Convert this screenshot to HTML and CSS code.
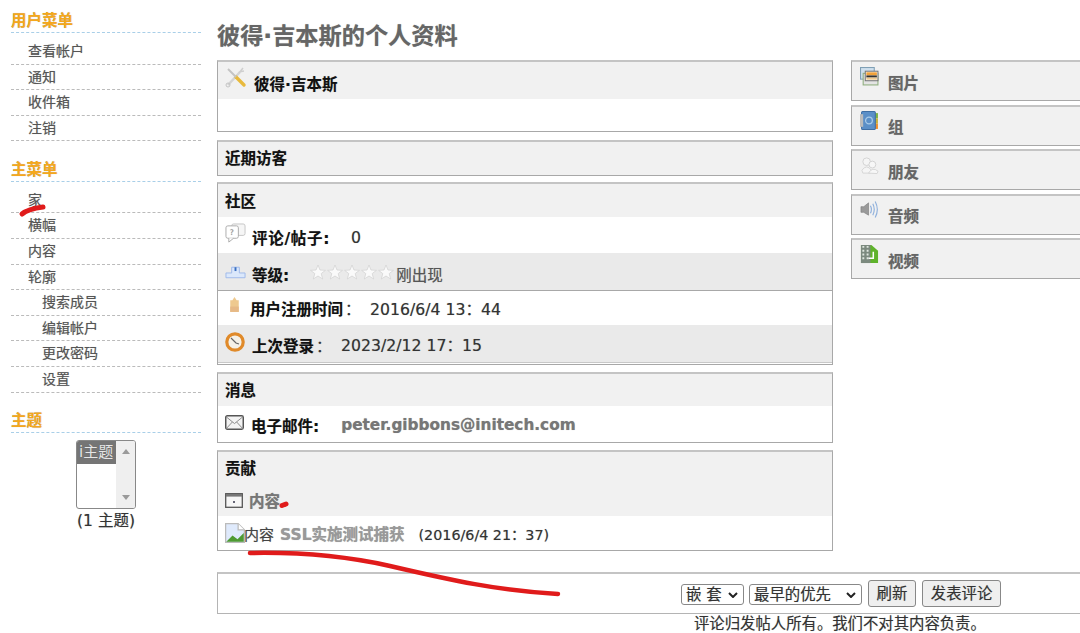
FILE: index.html
```html
<!DOCTYPE html>
<html lang="zh">
<head>
<meta charset="utf-8">
<title>彼得·吉本斯的个人资料</title>
<link rel="stylesheet" href="styles.css">
</head>
<body>
<div class="page">
  <aside class="sidebar">
    <h3 class="side-title">用户菜单</h3>
    <ul class="menu">
      <li>查看帐户</li><li>通知</li><li>收件箱</li><li>注销</li>
    </ul>
    <h3 class="side-title gap">主菜单</h3>
    <ul class="menu">
      <li>家</li><li>横幅</li><li>内容</li><li>轮廓</li>
      <li class="sub">搜索成员</li><li class="sub">编辑帐户</li><li class="sub">更改密码</li><li class="sub">设置</li>
    </ul>
    <h3 class="side-title gap">主题</h3>
    <div class="theme">
      <div class="listbox">
        <div class="list-items"><div class="list-sel">i主题</div></div>
        <div class="list-bar"><span class="arrow-up"></span><span class="arrow-down"></span></div>
      </div>
      <div class="theme-count">(1 主题)</div>
    </div>
  </aside>

  <main class="main">
    <h1 class="page-title">彼得·吉本斯的个人资料</h1>
    <div class="columns">
      <div class="left">
        <section class="panel p-user">
          <div class="head">
            <svg class="ic ic-tools" viewBox="0 0 22 22"><path d="M3 19 L15 6" stroke="#d4d4d4" stroke-width="2.5"/><path d="M14 7 L18 2 M14 6 L19 5" stroke="#cfcfcf" stroke-width="1.5" fill="none"/><path d="M11 11 L19 19" stroke="#e8b93c" stroke-width="3.4" stroke-linecap="round"/><path d="M3 3 L11 11" stroke="#c4c4c4" stroke-width="2"/><circle cx="3" cy="19" r="2" fill="none" stroke="#c4c4c4"/></svg>
            <span class="head-text">彼得·吉本斯</span>
          </div>
          <div class="user-body"></div>
        </section>

        <section class="panel p-visitors">
          <div class="head plain">近期访客</div>
        </section>

        <section class="panel p-community">
          <div class="head plain">社区</div>
          <div class="row r-comments">
            <svg class="ic ic-chat" viewBox="0 0 22 22"><rect x="7" y="1" width="14" height="12" rx="2" fill="#f6f6f6" stroke="#c5c5c5"/><rect x="1" y="3" width="13" height="13" rx="2" fill="#fff" stroke="#aaa"/><path d="M4 16 L4 20 L9 16" fill="#fff" stroke="#aaa"/><text x="5" y="13" class="ic-q">?</text></svg>
            <b class="b-wide">评论/帖子:</b><span class="val v-zero">0</span>
          </div>
          <div class="row alt r-level">
            <svg class="ic ic-rank" viewBox="0 0 22 16"><path d="M7 9 V3 H15 V9 H21 V14 H1 V9 Z" fill="#dbe8fb" stroke="#9db9ea"/><rect x="10" y="3" width="2" height="4" fill="#3b6fc0"/></svg>
            <b>等级:</b>
            <svg class="stars" viewBox="0 0 85 16">
              <defs><polygon id="star" points="8,1 10,6 15.5,6.3 11.2,9.6 12.7,15 8,12 3.3,15 4.8,9.6 0.5,6.3 6,6"/></defs>
              <use href="#star"/><use href="#star" x="17"/><use href="#star" x="34"/><use href="#star" x="51"/><use href="#star" x="68"/>
            </svg><span class="rank-text">刚出现</span>
          </div>
          <div class="row r-reg">
            <svg class="ic ic-candle" viewBox="0 0 12 16"><path d="M6 0 L8 3 H10 V14 H2 V3 H4 Z" fill="#eec98f"/><rect x="2" y="9" width="8" height="5" fill="#e6b987"/></svg>
            <b>用户注册时间</b><span class="colon">：</span><span class="val">2016/6/4 13：44</span>
          </div>
          <div class="row alt r-login">
            <svg class="ic ic-clock" viewBox="0 0 20 20"><circle cx="10" cy="10" r="8.2" fill="#f5f1e8" stroke="#e08a2a" stroke-width="3.2"/><path d="M6 6 L11 11 L14 12" stroke="#666" stroke-width="1.2" fill="none"/></svg>
            <b>上次登录</b><span class="colon">：</span><span class="val">2023/2/12 17：15</span>
          </div>
        </section>

        <section class="panel p-msg">
          <div class="head plain">消息</div>
          <div class="row r-mail">
            <svg class="ic ic-mail" viewBox="0 0 18 14"><rect x="0.7" y="0.7" width="16.6" height="12.6" rx="1.5" fill="#f3f3f3" stroke="#555" stroke-width="1.4"/><path d="M1 1.5 L9 8 L17 1.5 M1 13 L7 6.5 M17 13 L11 6.5" fill="none" stroke="#888" stroke-width="0.9"/></svg>
            <b>电子邮件:</b><a class="mail">peter.gibbons@initech.com</a>
          </div>
        </section>

        <section class="panel p-contrib">
          <div class="head plain">贡献</div>
          <div class="contrib-sub">
            <svg class="ic ic-win" viewBox="0 0 18 15"><rect x="0.7" y="0.7" width="16.6" height="13.6" fill="#f6f6f6" stroke="#555" stroke-width="1.3"/><rect x="1" y="1" width="16" height="2.6" fill="#777"/><rect x="8" y="8" width="2" height="2" fill="#667"/></svg>
            <span class="sub-link">内容</span>
          </div>
          <div class="row r-item">
            <svg class="ic ic-broken" viewBox="0 0 16 16"><path d="M0.5 0.5 H10.5 L15.5 5.5 V15.5 H0.5 Z" fill="#dfeafc" stroke="#bbb"/><path d="M10.5 0.5 V5.5 H15.5" fill="#fff" stroke="#bbb"/><path d="M1 15 L6 10 L10 13 L15 8 V15 Z" fill="#4e9a32"/></svg>
            <span class="item-kind">内容</span><a class="item-link">SSL实施测试捕获</a><span class="item-date">(2016/6/4 21：37)</span>
          </div>
        </section>
      </div>

      <div class="right">
        <div class="tile">
          <svg class="ic ic-t" viewBox="0 0 18 18"><rect x="0.5" y="0.5" width="13" height="11" fill="#cfe0ee" stroke="#7f9fb5"/><rect x="3" y="6" width="14" height="11" fill="#e4e4e4" stroke="#8fae7e"/><rect x="5" y="4" width="12" height="9" fill="#fff" stroke="#777"/><rect x="6" y="5" width="10" height="3" fill="#f1a23a"/><rect x="6" y="8" width="10" height="2" fill="#333"/><rect x="6" y="10" width="10" height="2" fill="#eec98f"/></svg>
          <span>图片</span>
        </div>
        <div class="tile">
          <svg class="ic ic-t" viewBox="0 0 18 18"><rect x="13" y="2" width="4" height="5" fill="#7cb342"/><rect x="13" y="7" width="4" height="5" fill="#c9b13a"/><rect x="13" y="12" width="4" height="5" fill="#ef8f2d"/><rect x="1.5" y="0.5" width="13" height="17" rx="1" fill="#5b8fc7" stroke="#3f6ea3"/><rect x="0" y="3" width="3" height="12" fill="#bbb"/><circle cx="8.5" cy="9" r="3.2" fill="none" stroke="#a9cbe8" stroke-width="1.2"/></svg>
          <span>组</span>
        </div>
        <div class="tile">
          <svg class="ic ic-t" viewBox="0 0 20 18"><circle cx="7" cy="5" r="4" fill="#f5f5f5" stroke="#d2d2d2"/><circle cx="13" cy="8" r="3.6" fill="#f7f7f7" stroke="#d2d2d2"/><path d="M2 14 Q7 7 12 14 L11 17 H3 Z" fill="#f5f5f5" stroke="#d5d5d5"/><path d="M9 17 Q13 10 19 15 L18 17.5 Z" fill="#f7f7f7" stroke="#d5d5d5"/></svg>
          <span>朋友</span>
        </div>
        <div class="tile">
          <svg class="ic ic-t" viewBox="0 0 20 20"><path d="M1 7 H4 L9 3 V16 L4 13 H1 Z" fill="#9a9a9a" stroke="#777" stroke-width="0.6"/><path d="M11 6 Q13 10 11 14 M13.5 4 Q16.5 10 13.5 16 M16 1.5 Q20.5 10 16 18.5" fill="none" stroke="#8fb0dc" stroke-width="1.2"/></svg>
          <span>音频</span>
        </div>
        <div class="tile">
          <svg class="ic ic-t" viewBox="0 0 18 20"><path d="M0 0 H11 L18 6 V19 H0 Z" fill="#5fb32b"/><rect x="0" y="0" width="10" height="19" fill="#7c8a7f"/><path d="M1.5 2 H3.5 M6 2 H8 M1.5 6 H3.5 M6 6 H8 M1.5 10 H3.5 M6 10 H8 M1.5 14 H3.5 M6 14 H8" stroke="#dfe7df" stroke-width="2"/><path d="M13 7 V14 H8" fill="none" stroke="#fff" stroke-width="1.6"/></svg>
          <span>视频</span>
        </div>
      </div>
    </div>

    <div class="comment-bar">
      <div class="sel sel-mode"><span>嵌 套</span><svg class="chev" viewBox="0 0 10 6"><path d="M1 1 L5 5 L9 1"/></svg></div>
      <div class="sel sel-order"><span>最早的优先</span><svg class="chev" viewBox="0 0 10 6"><path d="M1 1 L5 5 L9 1"/></svg></div>
      <button class="btn btn-narrow">刷新</button>
      <button class="btn">发表评论</button>
    </div>
    <p class="disclaimer">评论归发帖人所有。我们不对其内容负责。</p>
  </main>
</div>

<svg class="ink" viewBox="0 0 1080 633">
  <path d="M22 214 Q28 209 43 207" class="stroke s5"/>
  <path d="M282 505.5 L286 504" class="stroke s5"/>
  <path d="M250 553 C300 552 345 556 390 566 C450 580 500 591 558 594" class="stroke s4"/>
</svg>
</body>
</html>
```
FILE: styles.css
```css
* { box-sizing: border-box; }
html, body { margin: 0; padding: 0; height: 633px; overflow: hidden; background: #fff; }
body { font-family: "DejaVu Sans", "Noto Sans CJK SC", sans-serif; color: #333; position: relative; text-shadow: 0 0 0.7px rgba(60, 60, 60, 0.45); }
.page { display: flex; width: 1080px; height: 633px; overflow: hidden; }

.sidebar { flex: 0 0 190px; margin-left: 11px; padding-top: 10px; }
.side-title { margin: 0; height: 23px; line-height: 23px; font-size: 15.5px; font-weight: 700; color: #f5a81c; border-bottom: 1px dashed #a9cfe8; }
.side-title.gap { margin-top: 17.5px; }
.menu { list-style: none; margin: 6px 0 0; padding: 0; }
.menu li { height: 25.6px; line-height: 24.5px; padding-left: 17px; font-size: 14px; color: #555; border-bottom: 1px dashed #bbb; }
.menu li.sub { padding-left: 31px; }

.theme { display: flex; flex-direction: column; align-items: center; margin-top: 7px; }
.listbox { display: flex; width: 60px; height: 69px; border: 1px solid #888; border-radius: 3px; background: #fff; overflow: hidden; }
.list-items { flex: 1; }
.list-sel { height: 23px; line-height: 23px; background: #757575; color: #e6e6e6; font-size: 15px; padding-left: 2px; white-space: nowrap; }
.list-bar { flex: 0 0 19px; background: #efefef; display: flex; flex-direction: column; justify-content: space-between; align-items: center; padding: 8px 0; }
.arrow-up { border: 4px solid transparent; border-top: 0; border-bottom: 5px solid #9a9a9a; }
.arrow-down { border: 4px solid transparent; border-bottom: 0; border-top: 5px solid #9a9a9a; }
.theme-count { font-size: 15.5px; line-height: 24px; color: #333; }

.main { flex: 0 0 auto; width: 863px; margin-left: 16px; }
.page-title { margin: 0; padding-top: 21px; height: 60px; line-height: 30px; font-size: 23.2px; font-weight: 700; color: #666; }
.columns { display: flex; gap: 18px; }
.left { flex: 0 0 616px; }
.right { flex: 0 0 240px; }

.panel { border: 1px solid #a8a8a8; border-top: 2px solid #c4c4c4; margin-bottom: 8px; background: #fff; }
.head { background: #f1f1f1; font-size: 15.5px; font-weight: 700; color: #111; display: flex; align-items: center; }
.head.plain { padding: 0 0 4px 7px; }
.p-user { height: 72px; }
.p-user .head { height: 37px; padding-left: 7px; }
.head-text { margin-left: 7px; margin-top: 4px; }
.user-body { height: 33px; }
.p-visitors { height: 36px; margin-bottom: 6px; }
.p-visitors .head { height: 33px; }
.p-community { height: 183px; margin-bottom: 7px; }
.p-community .head { height: 33px; padding-bottom: 2px; }
.p-msg { height: 71px; margin-bottom: 7px; }
.p-msg .head { height: 32px; padding-bottom: 2px; }
.p-contrib { height: 101px; margin-bottom: 0; }
.p-contrib .head { height: 32px; padding-bottom: 2px; }

.row { display: flex; align-items: center; padding-left: 7px; font-size: 15.5px; color: #333; white-space: nowrap; }
.row b { font-weight: 700; color: #111; }
.row .val { font-size: 15.7px; }
.row.alt { background: #eaeaea; }
.ic { display: block; flex: none; }
.ic-tools { width: 22px; height: 22px; margin-top: -7px; }
.r-comments { height: 36px; padding-top: 4px; }
.b-wide { letter-spacing: 0.7px; }
.ic-chat { width: 21px; height: 21px; margin-top: -8px; margin-right: 6px; }
.ic-q { font-size: 8px; fill: #999; }
.v-zero { margin-left: 21px; }
.r-level { height: 38px; border-bottom: 1px solid #a8a8a8; padding-top: 4px; }
.ic-rank { width: 21px; height: 16px; margin-right: 6px; margin-top: -4px; }
.stars { width: 85px; height: 16px; margin-left: 21px; margin-top: -4px; fill: #fafafa; stroke: #d4d4d4; stroke-width: 0.8; flex: none; }
.rank-text { color: #555; margin-left: 1px; }
.r-reg { height: 34px; padding: 0 0 0 10px; }
.ic-candle { width: 13px; height: 17px; margin-right: 9px; margin-top: -6px; }
.colon { margin-left: 2px; margin-right: 9.5px; }
.r-login { height: 38px; border-bottom: 1px solid #c8c8c8; padding-top: 2px; }
.ic-clock { width: 20px; height: 20px; margin-right: 7px; margin-top: -6px; }
.r-mail { height: 36px; padding-top: 2px; }
.ic-mail { width: 19px; height: 15px; margin-right: 7px; margin-top: -5px; }
.mail { margin-left: 22px; font-weight: 700; color: #777; font-size: 15.3px; }
.contrib-sub { height: 32px; background: #f1f1f1; display: flex; align-items: center; padding: 0 0 0 7px; }
.ic-win { width: 18px; height: 15px; margin-right: 6px; }
.sub-link { font-size: 15.5px; font-weight: 700; color: #777; }
.r-item { height: 34px; font-size: 15px; padding-bottom: 0; }
.ic-broken { width: 20px; height: 20px; margin-right: -1px; }
.item-kind { color: #444; }
.item-link { margin-left: 6px; font-weight: 700; color: #999; font-size: 15.5px; }
.item-date { margin-left: 14px; font-size: 14.3px; }

.tile { height: 41px; margin-bottom: 3.5px; background: #f1f1f1; border: 1px solid #a8a8a8; border-top: 2px solid #c4c4c4; border-right: 0; display: flex; align-items: center; padding-left: 8px; font-size: 15.5px; font-weight: 700; color: #666; }
.ic-t { width: 19px; height: 19px; margin-top: -10px; margin-right: 9px; }
.tile span { margin-top: 1px; }

.comment-bar { display: flex; align-items: center; width: 863px; height: 42px; margin-top: 21px; padding-left: 463px; border: 1px solid #b4b4b4; border-top: 2px solid #c4c4c4; border-right: 0; }
.sel { display: flex; align-items: center; justify-content: space-between; height: 21px; padding: 1px 5px 0 4px; margin-top: 2px; font-size: 15.4px; line-height: 19px; color: #333; background: #fff; border: 1px solid #888; border-radius: 3px; white-space: nowrap; }
.sel-mode { width: 63px; margin-right: 5px; }
.sel-order { width: 113px; margin-right: 6px; }
.chev { width: 10px; height: 6px; fill: none; stroke: #222; stroke-width: 2; }
.btn { height: 27px; padding: 0 8px 3px; margin-right: 6px; font-family: "Noto Sans CJK SC", sans-serif; font-size: 15.4px; line-height: 22px; color: #333; background: #efefef; border: 1px solid #888; border-radius: 3px; text-shadow: inherit; }
.btn-narrow { padding: 0 7.5px 3px; }
.disclaimer { margin: 0; padding-left: 477px; line-height: 20px; font-size: 15.36px; color: #333; white-space: nowrap; }

.ink { position: absolute; left: 0; top: 0; width: 1080px; height: 633px; pointer-events: none; }
.stroke { fill: none; stroke: #e01b1b; stroke-linecap: round; }
.s5 { stroke-width: 5px; }
.s4 { stroke-width: 4.5px; }
```
